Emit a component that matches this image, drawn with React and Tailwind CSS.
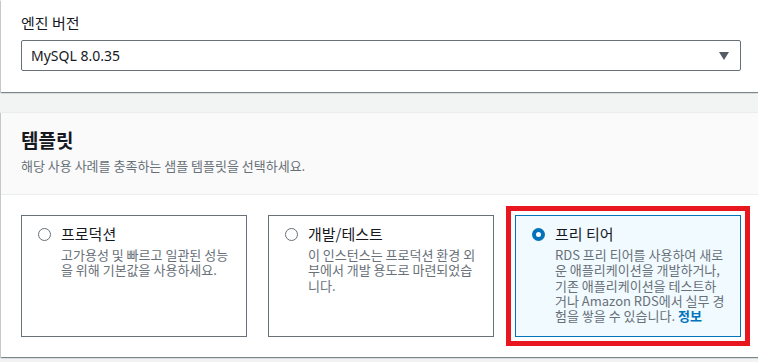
import { useState } from 'react'

const templates = [
  {
    id: 'prod',
    title: '프로덕션',
    desc: '고가용성 및 빠르고 일관된 성능을 위해 기본값을 사용하세요.',
  },
  {
    id: 'dev',
    title: '개발/테스트',
    desc: '이 인스턴스는 프로덕션 환경 외부에서 개발 용도로 마련되었습니다.',
  },
  {
    id: 'free',
    title: '프리 티어',
    desc: 'RDS 프리 티어를 사용하여 새로운 애플리케이션을 개발하거나, 기존 애플리케이션을 테스트하거나 Amazon RDS에서 실무 경험을 쌓을 수 있습니다.',
    info: true,
  },
]

const panelShadow =
  'shadow-[0_1px_1px_0_rgba(0,28,36,0.3),1px_1px_1px_0_rgba(0,28,36,0.15),-1px_1px_1px_0_rgba(0,28,36,0.15)]'

const Radio = ({ checked }) =>
  checked ? (
    <span className="mt-[4px] flex h-[13px] w-[13px] shrink-0 items-center justify-center rounded-full bg-[#0073bb]">
      <span className="h-[5px] w-[5px] rounded-full bg-white"></span>
    </span>
  ) : (
    <span className="mt-[4px] h-[13px] w-[13px] shrink-0 rounded-full border border-[#687078] bg-white"></span>
  )

const TemplateCard = ({ item, selected, onSelect }) => (
  <div className="relative">
    {selected && (
      <div className="pointer-events-none absolute -inset-[9px] border-[5px] border-[#e8161f]"></div>
    )}
    <button
      onClick={onSelect}
      className={
        'flex h-full w-full gap-[10px] border pl-4 pr-3 pt-[8px] pb-3 text-left ' +
        (selected ? 'border-[#0073bb] bg-[#f1faff]' : 'border-[#687078] bg-white')
      }
    >
      <Radio checked={selected} />
      <div className="min-w-0 flex-1">
        <div className="text-[15px] leading-[20px] text-[#16191f]">{item.title}</div>
        <p className="mt-[3px] break-all text-[13px] leading-[15.33px] text-[#687078]">
          {item.desc}
          {item.info && ' '}
          {item.info && <a className="font-bold text-[#0073bb]">정보</a>}
        </p>
      </div>
    </button>
  </div>
)

export default function App() {
  const [selected, setSelected] = useState('free')

  return (
    <div className="h-[362px] w-[758px] overflow-hidden bg-[#f2f3f3] pl-px font-['Noto_Sans_CJK_KR',sans-serif]">
      <div className={'h-[92px] w-[760px] bg-white pl-5 pt-[13px] ' + panelShadow}>
        <div className="text-[15px] leading-[20px] text-[#16191f]">엔진 버전</div>
        <div className="mt-[7px] flex h-[31px] w-[720px] items-center justify-between rounded-[2px] border border-[#687078] bg-white pl-[9px] pr-[11px]">
          <span className="font-['Noto_Sans',sans-serif] text-[14px] text-[#16191f]">MySQL 8.0.35</span>
          <svg width="10" height="8" viewBox="0 0 10 8">
            <path d="M0 0 L10 0 L5 8 Z" fill="#545b64" />
          </svg>
        </div>
      </div>

      <div className={'mt-5 w-[760px] border-t border-[#eaeded] bg-white ' + panelShadow}>
        <div className="border-b border-[#eaeded] bg-[#fafafa] pl-5 pt-[16px] pb-[20px]">
          <h2 className="text-[19px] font-bold leading-[22px] text-[#16191f]">템플릿</h2>
          <p className="mt-[7px] text-[13px] leading-[16px] text-[#687078]">
            해당 사용 사례를 충족하는 샘플 템플릿을 선택하세요.
          </p>
        </div>
        <div className="grid w-[740px] grid-cols-3 gap-[21px] pl-5 pt-5 pb-5">
          {templates.map((t) => (
            <TemplateCard
              key={t.id}
              item={t}
              selected={selected === t.id}
              onSelect={() => setSelected(t.id)}
            />
          ))}
        </div>
      </div>
    </div>
  )
}
